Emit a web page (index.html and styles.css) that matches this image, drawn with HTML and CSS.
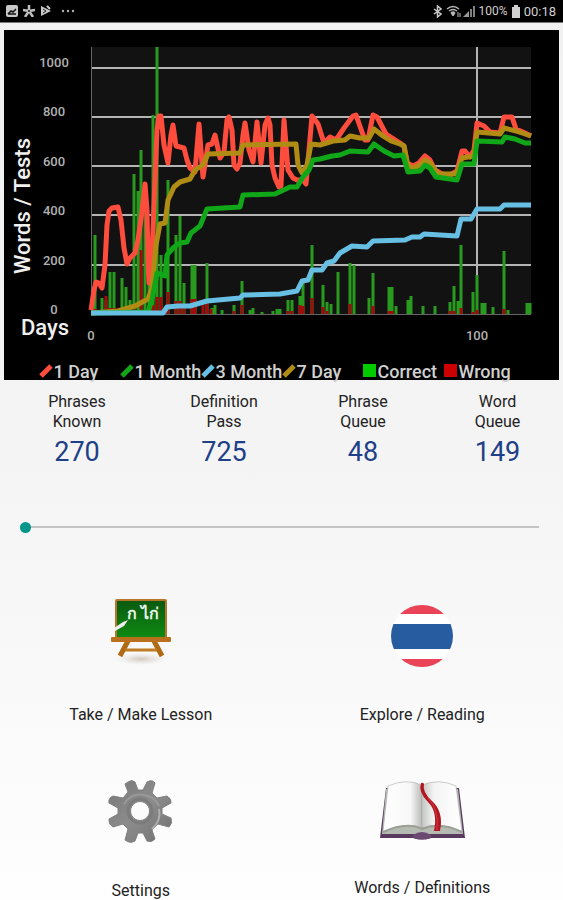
FILE: index.html
```html
<!DOCTYPE html>
<html lang="en">
<head>
    <meta charset="UTF-8">
    <meta name="viewport" content="width=device-width, initial-scale=1.0">
    <title>Thai Lessons</title>
    <link rel="stylesheet" href="styles.css">
</head>
<body>
    <header class="status-bar">
        <div class="status-group">
            <svg width="12" height="12" viewBox="0 0 12 12"><rect width="12" height="12" rx="2" fill="#c8c8c8"/><path d="M2 9l3-3 2 1 3-3M2 9h8" stroke="#111" stroke-width="1.5" fill="none"/></svg>
            <svg width="12" height="12" viewBox="0 0 12 12"><path d="M6 0v6M0 5l6 1 6-1M2 12l4-6 4 6" stroke="#c0c0c0" stroke-width="2.5" fill="none"/><circle cx="6" cy="6" r="1" fill="#111"/></svg>
            <svg width="12" height="12" viewBox="0 0 12 12"><path d="M1 1l10 5-10 5z" fill="#c8c8c8"/><path d="M3 4l3 2-3 2" stroke="#222" fill="none"/><path d="M7 1l3 3" stroke="#c8c8c8" stroke-width="2"/></svg>
            <svg class="more" width="14" height="12" viewBox="0 0 14 12" fill="#b0b0b0"><circle cx="2" cy="6" r="1.2"/><circle cx="7" cy="6" r="1.2"/><circle cx="12" cy="6" r="1.2"/></svg>
        </div>
        <div class="status-group status-right">
            <svg width="9" height="13" viewBox="0 0 9 13"><path d="M1 4l7 5-3.500 3V1L8 4 1 9" fill="none" stroke="#c8c8c8" stroke-width="1.500"/></svg>
            <svg width="29" height="13" viewBox="0 0 29 13"><path d="M1 4q6-5 12 0M3 6q4-3 8 0M5 8q2-2 4 0" fill="none" stroke="#b8b8b8" stroke-width="1.500"/><path d="M7 11l-2-3h4zM12 7v5M14 12v-4" stroke="#b8b8b8" fill="#b8b8b8"/><path d="M17 12l6-6v6z" fill="#999"/><path d="M25 4v8M28 1v11" stroke="#aaa" stroke-width="1.500"/></svg>
            <span class="battery">100%</span>
            <svg width="8" height="13" viewBox="0 0 8 13"><path d="M2 0h4v2h2v11H0V2h2z" fill="#d0d0d0"/></svg>
            <span>00:18</span>
        </div>
    </header>

    <main>
        <section class="chart">
            <svg class="plot" viewBox="4 30 555 330" role="img" aria-label="Words and tests by day">
                <rect x="91" y="47" width="440" height="267" fill="#121212"/>
                <path d="M91 68H531M91 117H531M91 166H531M91 215H531M91 265H531M477 47V314" stroke="#b4b4b4" stroke-width="2" fill="none"/>
                <path d="M91.500 47V314.500H531" stroke="#666" fill="none"/>
                <!-- correct -->
                <path class="bars correct" d="M95 314V235M102 314V298M106 314V300M110 314V272M114 314V272M122 314V278M126 314V287M130 314V300M134 314V174M138 314V191M141 314V150M145 314V200M149 314V250M153 314V115M157 314V47M161 314V255M168 314V180M176 314V235M180 314V216M184 314V283M192 314V265M195 314V265M207 314V263M212 314V308M215 314V305M222 314V310M234 314V305M242 314V281M250 314V310M253 314V308M262 314V312M273 314V311M277 314V309M280 314V309M288 314V300M292 314V300M300 314V296M303 314V280M312 314V245M323 314V285M327 314V302M331 314V304M338 314V272M350 314V263M354 314V265M369 314V298M373 314V273M389 314V287M392 314V287M396 314V306M408 314V300M411 314V296M423 314V306M435 314V306M450 314V302M454 314V286M458 314V301M461 314V245M473 314V292M477 314V275M482 314V303M485 314V303M493 314V307M504 314V251M508 314V310M527 314V303M530 314V303"/>
                <!-- wrong -->
                <path class="bars wrong" d="M95 314V309M106 314V296M110 314V308M114 314V308M118 314V308M122 314V309M134 314V306M141 314V250M153 314V305M157 314V297M161 314V297M168 314V292M176 314V301M180 314V301M184 314V306M192 314V299M195 314V299M203 314V305M207 314V303M211 314V309M234 314V311M242 314V305M288 314V311M292 314V311M300 314V305M303 314V306M312 314V298M323 314V307M327 314V311M350 314V304M373 314V306M389 314V311M392 314V311M450 314V311M454 314V311M461 314V308M473 314V312M477 314V310M504 314V309"/>
                <!-- 1 day, 7 day, 1 month, 3 month -->
                <polyline class="line day1" points="91,310 94,290 96,282 99,283 102,288 105,265 107,225 109,211 112,208 118,207 121,220 124,248 127,264 130,258 135,253 138,240 142,212 145,184 147,210 148,260 149,283 152,255 155,180 157,130 159,116 161,116 164,145 168,163 171,135 173,125 176,146 184,148 187,160 190,168 195,172 199,124 203,177 208,145 212,144 215,135 220,158 224,152 227,120 229,117 232,130 234,165 237,169 240,163 243,135 245,123 249,150 253,162 257,122 261,163 265,125 268,118 270,125 272,165 275,178 279,187 281,186 284,120 288,170 293,178 297,180 303,180 306,184 309,150 312,116 318,124 324,143 330,137 336,140 344,128 353,116 356,115 362,132 365,140 368,140 373,115 377,117 386,134 400,143 404,146 407,163 413,166 419,163 425,156 430,160 435,170 442,174 450,175 457,171 462,151 465,151 470,157 474,150 477,123 484,126 490,132 500,133 504,117 512,117 516,129 525,133 531,136"/>
                <polyline class="line day7" points="91,313 118,311 135,306 148,299 152,288 156,245 160,224 165,223 168,200 174,187 180,182 190,179 195,170 203,165 208,154 240,153 243,145 296,144 298,165 302,173 307,165 311,144 320,145 333,141 345,140 350,136 360,138 369,138 374,129 383,136 391,141 400,144 404,146 408,166 414,168 420,165 425,160 430,163 438,174 455,174 458,170 462,158 474,156 477,132 500,134 504,128 516,131 531,136"/>
                <polyline class="line month1" points="91,313 148,312 152,300 157,273 165,276 167,255 174,247 180,243 187,242 191,233 200,226 207,209 240,207 243,195 275,194 290,187 297,187 303,177 309,170 313,160 320,159 332,156 340,155 350,151 368,152 374,144 384,151 394,156 403,155 408,172 420,171 425,165 430,168 436,177 450,179 457,180 462,164 474,164 477,141 502,142 505,137 515,139 525,143 531,143"/>
                <polyline class="line month3" points="91,313 163,313 167,307 178,306 190,306 207,301 240,298 243,295 280,294 297,291 302,281 308,280 312,270 322,270 327,263 334,261 340,253 352,246 367,247 373,241 405,240 412,237 420,237 424,234 457,236 461,219 471,219 477,209 500,209 504,205 531,205"/>
                <g class="ticks">
                    <text x="54" y="67">1000</text>
                    <text x="54" y="116">800</text>
                    <text x="54" y="166">600</text>
                    <text x="54" y="215">400</text>
                    <text x="54" y="265">200</text>
                    <text x="54" y="314">0</text>
                    <text x="91" y="340">0</text>
                    <text x="477" y="340">100</text>
                </g>
                <text class="axis-title" transform="translate(30 206) rotate(-90)">Words / Tests</text>
                <text class="axis-title" x="45" y="335">Days</text>
            </svg>
            <ul class="legend">
                <li><svg class="key" viewBox="0 0 14 14"><path class="line day1" d="M2 12L12 2"/></svg>1 Day</li>
                <li><svg class="key" viewBox="0 0 14 14"><path class="line month1" d="M2 12L12 2"/></svg>1 Month</li>
                <li><svg class="key" viewBox="0 0 14 14"><path class="line month3" d="M2 12L12 2"/></svg>3 Month</li>
                <li><svg class="key" viewBox="0 0 14 14"><path class="line day7" d="M2 12L12 2"/></svg>7 Day</li>
                <li><svg class="key" viewBox="0 0 14 14"><rect width="13" height="13" fill="#00cc00"/></svg>Correct</li>
                <li><svg class="key" viewBox="0 0 14 14"><rect width="13" height="13" fill="#cc0000"/></svg>Wrong</li>
            </ul>
        </section>

        <dl class="stats">
            <div><dt>Phrases<br>Known</dt><dd>270</dd></div>
            <div><dt>Definition<br>Pass</dt><dd>725</dd></div>
            <div><dt>Phrase<br>Queue</dt><dd>48</dd></div>
            <div><dt>Word<br>Queue</dt><dd>149</dd></div>
        </dl>

        <input class="slider" type="range" min="0" max="100" value="0" aria-label="Day">

        <nav class="menu">
            <button type="button">
                <svg class="icon" width="90" height="90" viewBox="0 0 90 90">
                    <defs>
                        <linearGradient id="board" x2="0" y2="1"><stop stop-color="#0b5a10"/><stop offset="1" stop-color="#0e8a12"/></linearGradient>
                        <radialGradient id="shade"><stop stop-color="#a08060" stop-opacity=".4"/><stop offset="1" stop-color="#bbb" stop-opacity="0"/></radialGradient>
                    </defs>
                    <ellipse cx="45" cy="68" rx="26" ry="6" fill="url(#shade)"/>
                    <path d="M33 48l-9 17M57 48l9 17" stroke="#b06a14" stroke-width="5"/>
                    <path d="M29 59h32" stroke="#c07a22" stroke-width="3"/>
                    <rect x="19" y="8" width="52" height="40" rx="2" fill="#b8752a"/>
                    <rect x="21" y="10" width="48" height="36" fill="url(#board)"/>
                    <rect x="15" y="46" width="60" height="5" rx="1" fill="#b8701c"/>
                    <text class="board-text" x="47" y="28">ก ไก่</text>
                    <path d="M18 37l9-6 5-2-4 6-9 5z" fill="#eee"/>
                </svg>
                <span>Take / Make Lesson</span>
            </button>
            <button type="button">
                <svg class="icon" width="90" height="90" viewBox="0 0 90 90">
                    <defs><clipPath id="disc"><circle cx="45" cy="45" r="31"/></clipPath></defs>
                    <g clip-path="url(#disc)">
                        <rect x="14" y="14" width="62" height="62" fill="#fff"/>
                        <path d="M14 14h62v9H14zM14 68h62v9H14z" fill="#ea4257"/>
                        <path d="M14 33h62v25H14z" fill="#285ca0"/>
                    </g>
                </svg>
                <span>Explore / Reading</span>
            </button>
            <button type="button">
                <svg class="icon" width="90" height="90" viewBox="0 0 90 90">
                    <defs><linearGradient id="metal" x2="1" y2="1"><stop stop-color="#777"/><stop offset=".5" stop-color="#8c8c8c"/><stop offset="1" stop-color="#707070"/></linearGradient></defs>
                    <path fill="url(#metal)" stroke="#808080" stroke-linejoin="round" fill-rule="evenodd" d="M32 15Q36 12 39 15L42 23H47L51 15Q56 12 59 16L56 26 61 31 71 29Q76 32 75 36L66 41V47L75 51Q77 56 73 60L62 57 56 63 59 72Q56 76 51 74L47 66H42L39 74Q34 77 29 73L32 62 27 57 17 60Q12 57 13 52L22 47V41L13 36Q12 31 17 29L27 31 32 25 29 17zM44 34.500a9.500 9.500 0 1 0 .1 0z"/>
                    <path d="M28 37a20 20 0 0 1 35 2" fill="none" stroke="#999" stroke-width="2"/>
                    <path d="M63 42a20 20 0 0 1-7 20" fill="none" stroke="#b0b0b0" stroke-width="2"/>
                    <circle cx="44" cy="44" r="12" fill="none" stroke="#7c7c7c" stroke-width="3"/>
                </svg>
                <span>Settings</span>
            </button>
            <button type="button">
                <svg class="icon" width="90" height="87" viewBox="0 0 90 87">
                    <defs>
                        <linearGradient id="left" x2="1"><stop stop-color="#fff"/><stop offset=".7" stop-color="#f8f8f8"/><stop offset="1" stop-color="#b8bab6"/></linearGradient>
                        <linearGradient id="right" x2="1"><stop stop-color="#c4c6c2"/><stop offset=".3" stop-color="#f4f4f4"/><stop offset="1" stop-color="#fff"/></linearGradient>
                    </defs>
                    <path d="M9 21h5v43h62V21h6l6 50H54q-9 3-18 0H3z" fill="#5b3a60"/>
                    <path d="M9 22L5 67h32q8 4 16 0h33l-5-45z" fill="#b5bab2"/>
                    <path d="M11 19q18-8 34-1v43q-16-7-39 4z" fill="url(#left)" stroke="#aaa" stroke-width=".6"/>
                    <path d="M45 18q17-7 34 1l6 46q-22-11-40-4z" fill="url(#right)" stroke="#aaa" stroke-width=".6"/>
                    <path d="M6 65q24-11 39-3 18-8 40 3" fill="none" stroke="#9aa096" stroke-width="2"/>
                    <path d="M36 68q9-6 18 0v3q-9 3-18 0z" fill="#6b4872"/>
                    <path d="M44 16q2-1 3 1-2 8 8 17 12 11 8 30h-6q4-19-6-29-10-10-7-19z" fill="#b31620"/>
                    <path d="M51 31q11 11 9 32" fill="none" stroke="#d03c46" stroke-width="1"/>
                </svg>
                <span>Words / Definitions</span>
            </button>
        </nav>
    </main>
</body>
</html>
```
FILE: styles.css
```css
* {
    box-sizing: border-box;
}

body {
    margin: 0;
    min-height: 100vh;
    font-family: Roboto, 'Noto Sans', sans-serif;
    color: #222;
    background: linear-gradient(#f1f1f1, #f4f4f4 50%, #fefefe);
}

.status-bar {
    display: flex;
    justify-content: space-between;
    align-items: center;
    height: 23px;
    padding: 0 7px 0 6px;
    background: #000;
    border-bottom: 1px solid #777;
    color: #d0d0d0;
    font-size: 13px;
}

.status-group {
    display: flex;
    align-items: center;
    gap: 5px;
}

.status-right {
    gap: 4px;
}

.battery {
    font-size: 12px;
}

.more {
    margin-left: 4px;
}

main {
    padding-top: 7px;
}

.chart {
    margin: 0 4px;
    background: #000;
}

.plot {
    display: block;
    width: 100%;
}

.bars {
    stroke-width: 3;
    fill: none;
}

.correct {
    stroke: #289a1e;
}

.wrong {
    stroke: #a00c0c;
}

.line {
    fill: none;
    stroke-width: 5;
    stroke-linejoin: round;
}

.day1 {
    stroke: #ff4d3d;
}

.day7 {
    stroke: #b08c14;
}

.month1 {
    stroke: #10a818;
}

.month3 {
    stroke: #68bfe4;
}

.ticks {
    fill: #b0b0b0;
    font-size: 13px;
    font-weight: 500;
    text-anchor: middle;
}

.axis-title {
    fill: #f0f0f0;
    font-size: 22px;
    font-weight: 500;
    text-anchor: middle;
}

.legend {
    display: grid;
    grid-template-columns: repeat(6, 81px);
    justify-content: center;
    height: 20px;
    margin: 0;
    padding: 0;
    list-style: none;
    color: #d0d0d0;
    font-size: 18px;
    font-weight: 500;
    line-height: 24px;
    white-space: nowrap;
}

.key {
    width: 14px;
    height: 14px;
    margin-right: 1px;
}

.stats {
    display: grid;
    grid-template-columns: 154fr 140fr 138fr 131fr;
    margin: 12px 0 0;
    text-align: center;
}

.stats dt {
    font-size: 16px;
    line-height: 20px;
}

.stats dd {
    margin: 2px 0 0;
    color: #1e4088;
    font-size: 27px;
    line-height: 36px;
}

.slider {
    display: block;
    width: calc(100% - 44px);
    height: 12px;
    margin: 51px 24px 0 20px;
    appearance: none;
    background: linear-gradient(#c4c4c4, #c4c4c4) center / 100% 2px no-repeat;
}

.slider::-webkit-slider-thumb {
    appearance: none;
    width: 11px;
    height: 11px;
    border-radius: 50%;
    background: #009688;
}

.menu {
    display: grid;
    grid-template-columns: 1fr 1fr;
    row-gap: 42px;
    margin-top: 58px;
}

.menu button {
    display: flex;
    flex-direction: column;
    align-items: center;
    gap: 24px;
    padding: 0;
    border: 0;
    background: none;
    color: #222;
    font-family: inherit;
    font-size: 16px;
    line-height: 20px;
    cursor: pointer;
}

.board-text {
    fill: #e8f4e8;
    font-size: 16px;
    font-weight: bold;
    text-anchor: middle;
}
```
